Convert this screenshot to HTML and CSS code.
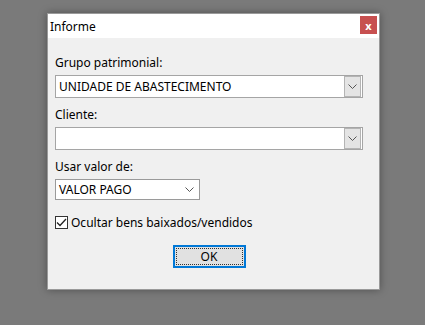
FILE: index.html
```html
<!DOCTYPE html>
<html lang="pt">

<head>
  <meta charset="UTF-8">
  <title>Informe</title>
  <link rel="stylesheet" href="styles.css">
</head>

<body>
  <div class="dialog">
    <div class="titlebar">
      <span class="title">Informe</span>
      <span class="close">x</span>
    </div>

    <div class="content">
      <label class="field-label">Grupo patrimonial:</label>
      <div class="combo">
        <span class="combo-text">UNIDADE DE ABASTECIMENTO</span>
        <span class="combo-btn">
          <svg width="9" height="5" viewBox="0 0 9 5"><path d="M0.5 0.5 L4.5 4.5 L8.5 0.5" fill="none" stroke="#555" stroke-width="1"/></svg>
        </span>
      </div>

      <label class="field-label">Cliente:</label>
      <div class="combo">
        <span class="combo-text"></span>
        <span class="combo-btn">
          <svg width="9" height="5" viewBox="0 0 9 5"><path d="M0.5 0.5 L4.5 4.5 L8.5 0.5" fill="none" stroke="#555" stroke-width="1"/></svg>
        </span>
      </div>

      <label class="field-label">Usar valor de:</label>
      <div class="combo combo-list">
        <span class="combo-text">VALOR PAGO</span>
        <span class="combo-arrow">
          <svg width="9" height="5" viewBox="0 0 9 5"><path d="M0.5 0.5 L4.5 4.5 L8.5 0.5" fill="none" stroke="#555" stroke-width="1"/></svg>
        </span>
      </div>

      <div class="check-row">
        <span class="checkbox">
          <svg width="11" height="9" viewBox="0 0 11 9"><path d="M1 4.5 L4 7.5 L10 1" fill="none" stroke="#222" stroke-width="1.3"/></svg>
        </span>
        <span>Ocultar bens baixados/vendidos</span>
      </div>

      <div class="actions">
        <button class="btn-ok"><span class="focus">OK</span></button>
      </div>
    </div>
  </div>
</body>

</html>
```

FILE: styles.css
```css
body {
  margin: 0;
  padding: 13px 0 0 47px;
  height: 325px;
  box-sizing: border-box;
  background-color: #7a7a7a;
  font-family: 'Noto Sans', 'Liberation Sans', sans-serif;
  font-size: 12px;
  color: #000000;
}

.dialog {
  width: 333px;
  height: 277px;
  box-sizing: border-box;
  background-color: #f0f0f0;
  border: 1px solid #9a9a9a;
  box-shadow: 0 0 8px rgba(0, 0, 0, 0.35);
  display: flex;
  flex-direction: column;
}

.titlebar {
  height: 24px;
  flex-shrink: 0;
  background-color: #ffffff;
  display: flex;
  align-items: center;
  justify-content: space-between;
  padding-left: 2px;
  padding-right: 2px;
}

.title {
  font-size: 12px;
}

.close {
  align-self: flex-start;
  margin-top: 2px;
  width: 17px;
  height: 18px;
  background-color: #c75050;
  color: #ffffff;
  font-weight: bold;
  font-size: 11px;
  line-height: 1;
  display: flex;
  align-items: center;
  justify-content: center;
}

.content {
  padding: 17px 16px 0 7px;
  display: flex;
  flex-direction: column;
}

.field-label {
  line-height: 16px;
  margin-bottom: 4px;
}

.combo {
  height: 23px;
  box-sizing: border-box;
  background-color: #ffffff;
  border: 1px solid #a5a5a5;
  display: flex;
  align-items: center;
  justify-content: space-between;
  padding-left: 3px;
  padding-right: 1px;
  margin-bottom: 9px;
}

.combo-btn {
  width: 15px;
  height: 19px;
  background-color: #e4e4e4;
  border: 1px solid #b4b4b4;
  display: flex;
  align-items: center;
  justify-content: center;
}

.combo-list {
  width: 145px;
  height: 21px;
  border-color: #9a9a9a;
  padding-right: 5px;
  margin-bottom: 0;
}

.combo-arrow {
  display: flex;
}

.check-row {
  height: 15px;
  display: flex;
  align-items: center;
  gap: 3px;
  margin-top: 15px;
}

.checkbox {
  width: 13px;
  height: 13px;
  box-sizing: border-box;
  border: 1px solid #333333;
  background-color: #ffffff;
  display: flex;
  align-items: center;
  justify-content: center;
}

.actions {
  display: flex;
  justify-content: center;
  margin-top: 15px;
}

.btn-ok {
  width: 73px;
  height: 23px;
  padding: 2px;
  background-color: #e1e1e1;
  border: 1px solid #0078d7;
  box-shadow: inset 0 0 0 1px #0078d7;
  font-family: inherit;
  font-size: 12px;
  display: flex;
}

.focus {
  flex: 1;
  border: 1px dotted #333333;
  display: flex;
  align-items: center;
  justify-content: center;
}
```
